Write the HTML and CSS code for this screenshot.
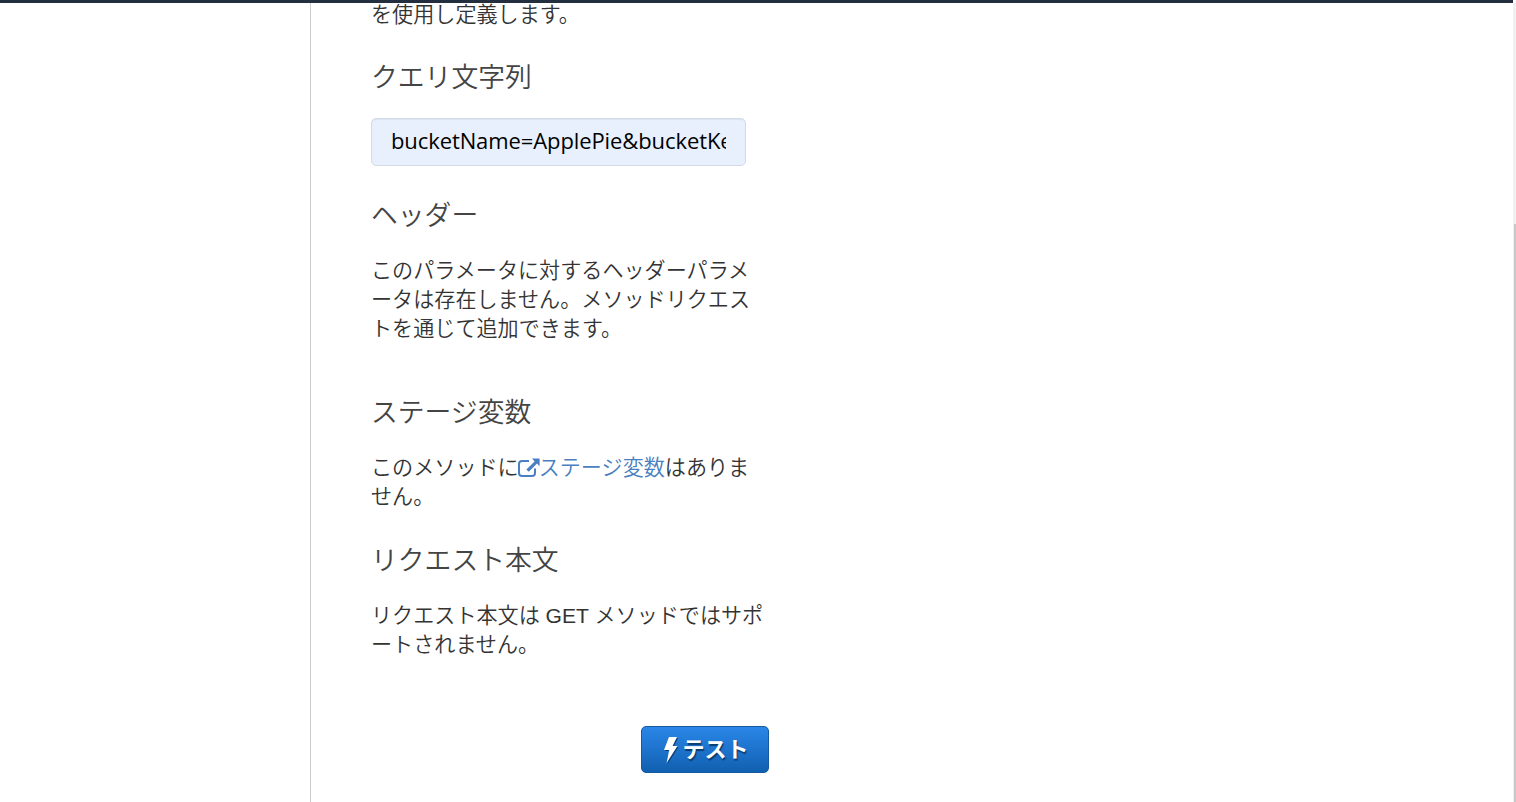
FILE: index.html
```html
<!DOCTYPE html>
<html lang="ja">
<head>
<meta charset="utf-8">
<title>メソッドリクエスト</title>
<link rel="stylesheet" href="styles.css">
</head>
<body>
<div class="topbar"></div>
<div class="frame">
  <main class="panel">
    <div class="column">
      <p class="para cut">を使用し定義します。</p>
      <h3 class="heading h-query">クエリ文字列</h3>
      <input class="field" type="text" value="bucketName=ApplePie&amp;bucketKey=test">
      <h3 class="heading h-header">ヘッダー</h3>
      <p class="para p-header">このパラメータに対するヘッダーパラメータは存在しません。メソッドリクエストを通じて追加できます。</p>
      <h3 class="heading h-stage">ステージ変数</h3>
      <p class="para p-stage">このメソッドに<a class="link" href="#"><svg class="ext" viewBox="0 0 22 20" aria-hidden="true"><path d="M17 11.5V16a3 3 0 0 1-3 3H4a3 3 0 0 1-3-3V7a3 3 0 0 1 3-3h7" fill="none" stroke="currentColor" stroke-width="2"/><path d="M8.4 12.4 16.6 4.4 14 1.5H21.6V9.2L19 6.6 10.8 14.8Z" fill="currentColor"/></svg>ステージ変数</a>はありません。</p>
      <h3 class="heading h-body">リクエスト本文</h3>
      <p class="para p-body">リクエスト本文は GET メソッドではサポートされません。</p>
      <div class="actions">
        <button class="test" type="button"><svg class="bolt" viewBox="0 0 15 26" aria-hidden="true"><path d="M6 0H14L9.6 9H14.5L3.6 26 6.2 13H1Z" fill="currentColor"/></svg><span class="test-label">テスト</span></button>
      </div>
    </div>
  </main>
  <div class="scrollbar"><div class="thumb"></div></div>
</div>
</body>
</html>
```
FILE: styles.css
```css
* { box-sizing: border-box; }
html, body { margin: 0; height: 100%; overflow: hidden; }
body {
  background: #fff;
  color: #444;
  font-family: "Liberation Sans", "Noto Sans CJK JP", sans-serif;
  display: flex;
  flex-direction: column;
}
.topbar { height: 3px; background: #232f3e; flex: none; margin-right: 3px; }
.frame { flex: 1; display: flex; min-height: 0; }
.panel {
  flex: 1;
  margin-left: 310px;
  border-left: 1px solid #ccc;
  padding-left: 60px;
  min-width: 0;
}
.column { width: 398px; }
.para {
  margin: 0;
  width: 396px;
  font-size: 21.1px;
  line-height: 29px;
  font-weight: 350;
  color: #333;
}
.cut { margin-top: -3px; }
.heading {
  margin: 0;
  font-size: 26.8px;
  line-height: 36px;
  font-weight: 350;
  color: #444;
}
.h-query { margin-top: 31px; }
.field {
  display: block;
  margin-top: 22px;
  width: 375px;
  height: 48px;
  padding: 0 19px 4px;
  border: 1px solid #d5dbe6;
  border-radius: 5px;
  background: #e8f0fe;
  box-shadow: inset 0 1px 1px rgba(0, 0, 0, .06);
  color: #000;
  font-family: "Open Sans", "Liberation Sans", sans-serif;
  font-size: 22px;
  letter-spacing: -.1px;
}
.h-header { margin-top: 32px; }
.p-header { margin-top: 22px; }
.h-stage { margin-top: 52px; }
.p-stage { margin-top: 22px; }
.link { color: #4a7fc1; text-decoration: none; }
.ext { width: 22px; height: 20px; margin: 0 -1px; vertical-align: -2px; }
.h-body { margin-top: 32px; }
.p-body { margin-top: 22px; }
.actions { display: flex; justify-content: flex-end; margin-top: 67px; }
.test {
  display: flex;
  align-items: center;
  justify-content: center;
  gap: 4px;
  width: 128px;
  height: 47px;
  padding: 0 0 0 2px;
  border: 1px solid #15599f;
  border-radius: 5px;
  background: linear-gradient(#2a86e8, #1160b0);
  color: #fff;
  font-family: "Noto Sans CJK JP", sans-serif;
  font-size: 22px;
  font-weight: 700;
  text-shadow: 1px 2px 1px #0b3c70;
}
.test-label { padding-bottom: 5px; }
.bolt { width: 15px; height: 26px; filter: drop-shadow(1px 1px 0 #0b3c70); }
.scrollbar { width: 3px; flex: none; background: #f1f1f1; position: relative; }
.thumb { position: absolute; top: 221px; left: 1px; right: 0; bottom: 0; background: #c8c8c8; }
```
